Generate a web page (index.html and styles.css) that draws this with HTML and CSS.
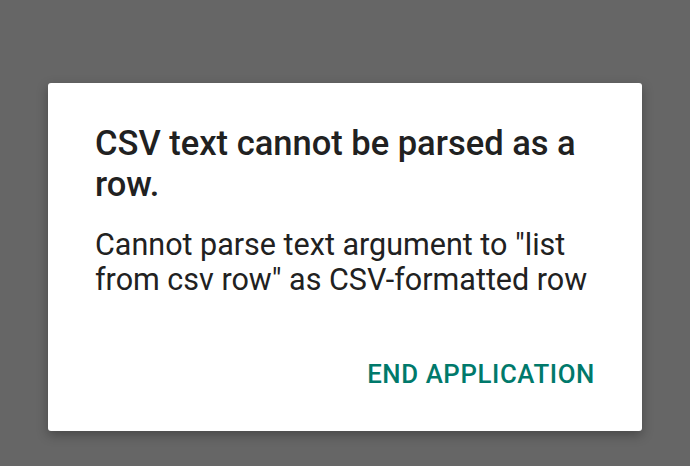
FILE: index.html
```html
<!DOCTYPE html>
<html>
<head>
<meta charset="utf-8">
<link rel="stylesheet" href="styles.css">
</head>
<body>
<div class="screen">
  <div class="dialog">
    <h1 class="title">CSV text cannot be parsed as a row.</h1>
    <p class="message">Cannot parse text argument to "list from csv row" as CSV-formatted row</p>
    <div class="actions">
      <button class="btn">END APPLICATION</button>
    </div>
  </div>
</div>
</body>
</html>
```

FILE: styles.css
```css
html, body {
  margin: 0;
  padding: 0;
  width: 690px;
  height: 466px;
  overflow: hidden;
  background: #666666;
  font-family: Roboto, "Noto Sans", sans-serif;
}
.screen {
  width: 690px;
  height: 466px;
  padding: 83px 48px 0 48px;
  box-sizing: border-box;
}
.dialog {
  width: 594px;
  height: 348px;
  background: #ffffff;
  border-radius: 3px;
  box-shadow: 0 4px 12px rgba(0,0,0,0.3);
  box-sizing: border-box;
  padding: 40px 47px 0 47px;
  display: flex;
  flex-direction: column;
}
.title {
  margin: 0;
  font-size: 34.5px;
  font-weight: 500;
  line-height: 41px;
  color: #212121;
}
.message {
  margin: 22px 0 0 0;
  font-size: 30.5px;
  font-weight: 400;
  line-height: 35px;
  color: #212121;
}
.actions {
  display: flex;
  justify-content: flex-end;
  margin-top: 62px;
}
.btn {
  border: none;
  background: none;
  padding: 0;
  font-family: Roboto, sans-serif;
  font-size: 25.8px;
  line-height: 30px;
  font-weight: 500;
  color: #00796b;
  letter-spacing: 0.6px;
}
```
